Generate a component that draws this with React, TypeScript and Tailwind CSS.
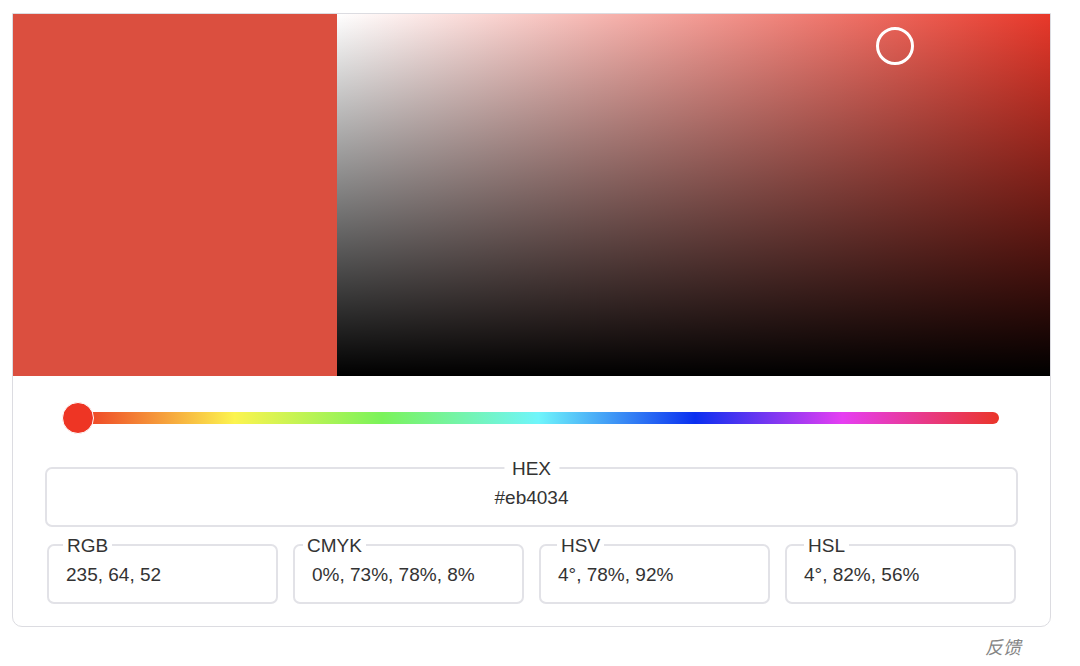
import React from 'react'

const font = { fontFamily: '"Liberation Sans", Arial, "Noto Sans CJK SC", sans-serif' }

type Field = { label: string; value: string; labelLeft: string }

const fields: Field[] = [
  { label: 'RGB', value: '235, 64, 52', labelLeft: 'left-[14px]' },
  { label: 'CMYK', value: '0%, 73%, 78%, 8%', labelLeft: 'left-[8px]' },
  { label: 'HSV', value: '4°, 78%, 92%', labelLeft: 'left-[16px]' },
  { label: 'HSL', value: '4°, 82%, 56%', labelLeft: 'left-[17px]' },
]

function ValueBox({ field }: { field: Field }) {
  return (
    <div className="relative h-[60px] rounded-[7px] border-2 border-[#e2e2e7] flex items-center pl-[17px]">
      <span className={`absolute -top-[11px] ${field.labelLeft} bg-white px-[4px] leading-[22px] text-[19px] text-[#333]`}>
        {field.label}
      </span>
      <span className="text-[19px] text-[#333] leading-none">{field.value}</span>
    </div>
  )
}

export default function App() {
  return (
    <div className="w-[1080px] h-[666px] bg-white pt-[13px] pl-[12px] overflow-hidden" style={font}>
      <div className="w-[1039px] border border-[#dcdce1] rounded-b-[10px] pb-[22px]">
        {/* picker area */}
        <div className="flex h-[362px]">
          <div className="w-[324px] bg-[#db4f3f]" />
          <div className="relative flex-1 bg-[linear-gradient(to_right,#ffffff,#e8382a)]">
            <div className="absolute inset-0 bg-[linear-gradient(to_top,#000000,rgba(0,0,0,0))]" />
            <div className="absolute left-[539px] top-[13px] w-[38px] h-[38px] rounded-full border-[3px] border-white" />
          </div>
        </div>

        {/* hue slider */}
        <div className="relative h-[32px] mt-[26px] ml-[49px] mr-[51px]">
          <div className="absolute left-[16px] right-0 top-[10px] h-[12px] rounded-r-full bg-[linear-gradient(to_right,#ee3a24,#fcf44f_17%,#7af35a_33%,#6ff5fb_50%,#0a2ff0_67%,#e63ef2_83%,#ea3528)]" />
          <div className="absolute left-0 top-0 w-[32px] h-[32px] rounded-full bg-[#ee3524] border border-white" />
        </div>

        {/* hex */}
        <div className="relative mt-[33px] mx-[32px] h-[60px] rounded-[7px] border-2 border-[#e2e2e7] flex items-center justify-center">
          <span className="absolute -top-[11px] left-1/2 -translate-x-1/2 bg-white px-[8px] leading-[22px] text-[19px] text-[#333]">
            HEX
          </span>
          <span className="text-[19px] text-[#333] leading-none">#eb4034</span>
        </div>

        {/* value row */}
        <div className="grid grid-cols-4 gap-[15px] mt-[17px] mx-[34px]">
          {fields.map((f) => (
            <ValueBox key={f.label} field={f} />
          ))}
        </div>
      </div>

      <div className="flex justify-end pr-[59px] mt-[8px]">
        <span className="italic text-[18px] text-[#858585]">反馈</span>
      </div>
    </div>
  )
}
